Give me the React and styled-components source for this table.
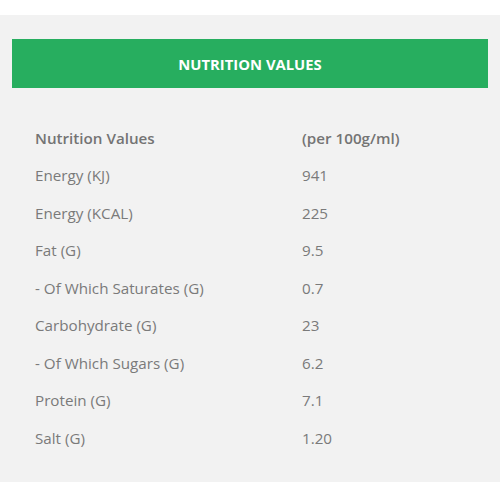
import React from 'react';
import styled, { createGlobalStyle } from 'styled-components';

const GlobalStyle = createGlobalStyle`
  body {
    margin: 0;
    background: #ffffff;
    font-family: "Open Sans", "Liberation Sans", sans-serif;
  }
`;

const rows = [
  ['Energy (KJ)', '941'],
  ['Energy (KCAL)', '225'],
  ['Fat (G)', '9.5'],
  ['- Of Which Saturates (G)', '0.7'],
  ['Carbohydrate (G)', '23'],
  ['- Of Which Sugars (G)', '6.2'],
  ['Protein (G)', '7.1'],
  ['Salt (G)', '1.20'],
];

const App = () => {
  return (
    <>
      <GlobalStyle />
      <Page>
        <Panel>
          <Banner>NUTRITION VALUES</Banner>
          <Table>
            <Row>
              <Cell $head>Nutrition Values</Cell>
              <Cell $head>(per 100g/ml)</Cell>
            </Row>
            {rows.map(([name, value]) => (
              <Row key={name}>
                <Cell>{name}</Cell>
                <Cell>{value}</Cell>
              </Row>
            ))}
          </Table>
        </Panel>
      </Page>
    </>
  );
};

export default App;

const Page = styled.div`
  padding-top: 15px;
`;

const Panel = styled.div`
  background: #f2f2f2;
  padding: 24px 12px 25px;
  height: 467px;
  box-sizing: border-box;
`;

const Banner = styled.div`
  background: #27ae5f;
  color: #ffffff;
  height: 49px;
  display: flex;
  align-items: center;
  justify-content: center;
  font-size: 14.8px;
  font-weight: 700;
`;

const Table = styled.div`
  margin-top: 31px;
  padding-left: 23px;
  display: flex;
  flex-direction: column;
`;

const Row = styled.div`
  display: grid;
  grid-template-columns: 267px 1fr;
  height: 37.5px;
  align-items: center;
`;

const Cell = styled.div`
  font-size: 15.2px;
  color: ${(p) => (p.$head ? '#747474' : '#7a7a7a')};
  font-weight: ${(p) => (p.$head ? 600 : 400)};
`;
